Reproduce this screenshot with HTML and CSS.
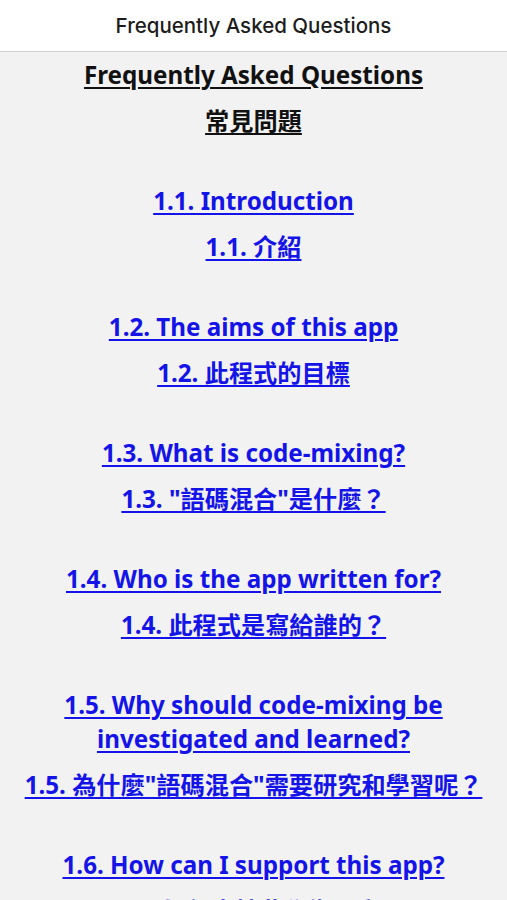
FILE: index.html
```html
<!DOCTYPE html>
<html lang="en">
<head>
<meta charset="UTF-8">
<meta name="viewport" content="width=device-width, initial-scale=1.0">
<link rel="stylesheet" href="styles.css">
<title>Frequently Asked Questions</title>
</head>
<body>
<header class="topbar">Frequently Asked Questions</header>
<main class="content">
    <p class="heading">Frequently Asked Questions</p>
    <p class="heading">常見問題</p>

    <div class="group">
        <p><a href="#">1.1. Introduction</a></p>
        <p><a href="#">1.1. 介紹</a></p>
    </div>
    <div class="group">
        <p><a href="#">1.2. The aims of this app</a></p>
        <p><a href="#">1.2. 此程式的目標</a></p>
    </div>
    <div class="group">
        <p><a href="#">1.3. What is code-mixing?</a></p>
        <p><a href="#">1.3. "語碼混合"是什麼？</a></p>
    </div>
    <div class="group">
        <p><a href="#">1.4. Who is the app written for?</a></p>
        <p><a href="#">1.4. 此程式是寫給誰的？</a></p>
    </div>
    <div class="group">
        <p><a href="#">1.5. Why should code-mixing be investigated and learned?</a></p>
        <p><a href="#">1.5. 為什麼"語碼混合"需要研究和學習呢？</a></p>
    </div>
    <div class="group">
        <p><a href="#">1.6. How can I support this app?</a></p>
        <p><a href="#">1.6. 如何支持此學術研究?</a></p>
    </div>
</main>
</body>
</html>
```

FILE: styles.css
```css
body {
    margin: 0;
    background: #f2f2f2;
    font-family: "Noto Sans", "Noto Sans CJK TC", sans-serif;
}

.topbar {
    height: 51px;
    background: #ffffff;
    border-bottom: 1px solid #cfcfcf;
    display: flex;
    justify-content: center;
    align-items: center;
    font-family: Inter, Roboto, sans-serif;
    font-size: 20.5px;
    font-weight: 500;
    color: #1c1c1c;
}

.content {
    padding: 6px 16px 40px;
    text-align: center;
    font-size: 24.2px;
    font-weight: bold;
    line-height: 34px;
}

.content p {
    margin: 0 0 12px;
}

.heading {
    color: #111111;
    text-decoration: underline;
    text-decoration-thickness: 2px;
    text-underline-offset: 3px;
}

.group {
    margin-top: 46px;
}

.group a {
    color: #1414e8;
    text-decoration-thickness: 2px;
    text-underline-offset: 3px;
}
```
